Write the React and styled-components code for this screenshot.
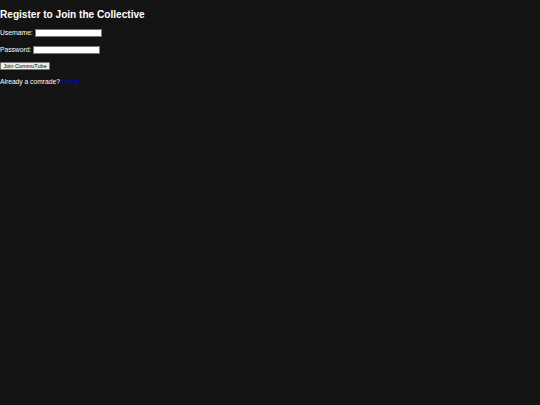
import React from "react";
import styled, { createGlobalStyle } from "styled-components";

const Global = createGlobalStyle`
  html, body {
    margin: 0;
    padding: 0;
    background: #131313;
  }
  body {
    font-family: "Liberation Sans", Arial, sans-serif;
    color: #ffffff;
    font-size: 6.6px;
  }
`;

const Page = styled.div`
  min-height: 405px;
  background: #131313;
  color: #ffffff;
`;

const Heading = styled.h2`
  margin: 0 0 8.5px;
  padding-top: 8.7px;
  font-size: 10.1px;
  font-weight: bold;
  line-height: 12px;
`;

const Form = styled.form`
  display: flex;
  flex-direction: column;
  align-items: flex-start;
`;

const Row = styled.div`
  display: flex;
  align-items: center;
  gap: 2px;
  height: 8px;
  margin-bottom: ${(p) => p.$gap ?? 8.5}px;
`;

const Label = styled.label`
  font-size: 6.7px;
  line-height: 8px;
`;

const Input = styled.input`
  box-sizing: border-box;
  width: 67px;
  height: 8px;
  padding: 0 1px;
  border: 1px solid #767676;
  border-radius: 0;
  background: #ffffff;
  font-size: 5.5px;
  font-family: "Liberation Sans", Arial, sans-serif;
  outline: none;
`;

const Button = styled.button`
  box-sizing: border-box;
  height: 8px;
  padding: 0 2.5px;
  background: #efefef;
  border: 1px solid #767676;
  border-radius: 1px;
  color: #000000;
  font-size: 5.5px;
  font-family: "Liberation Sans", Arial, sans-serif;
  line-height: 6px;
  cursor: pointer;
`;

const Note = styled.p`
  margin: 0;
  font-size: 6.7px;
  line-height: 8px;
`;

const Link = styled.a`
  color: #0000ee;
  text-decoration: underline;
`;

export default function App() {
  return (
    <Page>
      <Global />
      <Heading>Register to Join the Collective</Heading>
      <Form onSubmit={(e) => e.preventDefault()}>
        <Row>
          <Label htmlFor="username">Username:</Label>
          <Input id="username" type="text" />
        </Row>
        <Row>
          <Label htmlFor="password">Password:</Label>
          <Input id="password" type="password" />
        </Row>
        <Row $gap={7.5}>
          <Button type="submit">Join CommuTube</Button>
        </Row>
      </Form>
      <Note>
        Already a comrade? <Link href="#">Log in</Link>
      </Note>
    </Page>
  );
}
